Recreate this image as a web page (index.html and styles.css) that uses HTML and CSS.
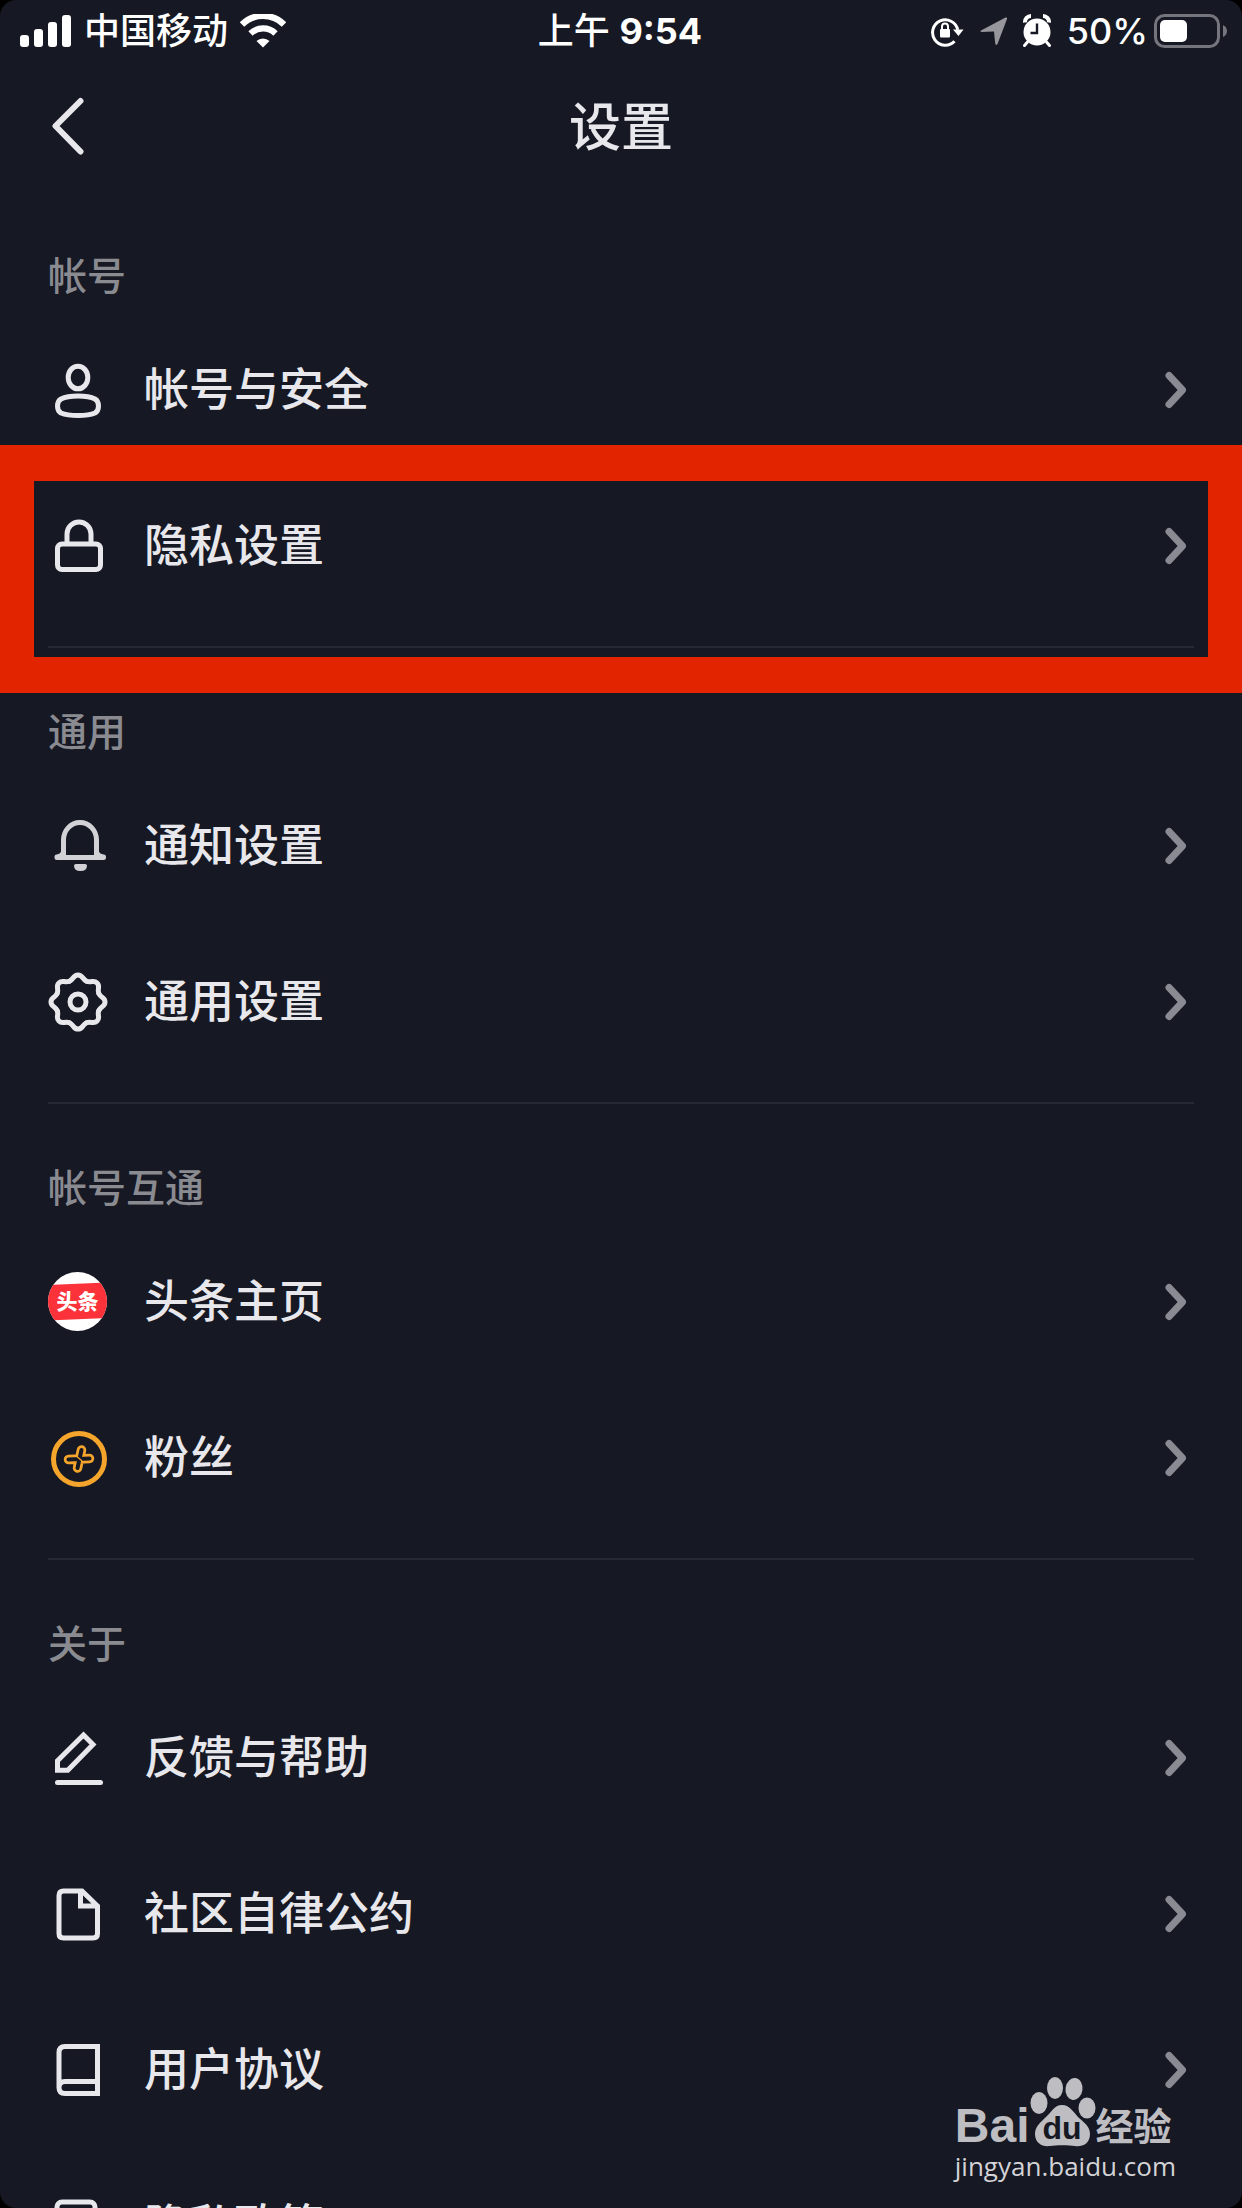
FILE: index.html
```html
<!DOCTYPE html>
<html lang="zh-CN">
<head>
<meta charset="utf-8">
<meta name="viewport" content="width=device-width">
<title>设置</title>
<link rel="stylesheet" href="styles.css">
</head>
<body>
<div class="screen">
  <div class="status">
    <div class="status-left">
      <svg class="signal" viewBox="0 0 52 34" aria-hidden="true"><rect x="0" y="21" width="9" height="12" rx="3"/><rect x="14" y="15" width="9" height="18" rx="3"/><rect x="28" y="8" width="9" height="25" rx="3"/><rect x="42" y="1" width="9" height="32" rx="3"/></svg>
      <span>中国移动</span>
      <svg class="wifi" viewBox="0 0 46 34" aria-hidden="true"><path d="M2 11.5a30 30 0 0 1 42 0" fill="none" stroke="#fff" stroke-width="6.4" transform="translate(0 -1)"/><path d="M10.500 20.500a18 18 0 0 1 25 0" fill="none" stroke="#fff" stroke-width="6.200" transform="translate(0 -1)"/><path d="M23 33.500l-6.500-6.500a9.500 9.500 0 0 1 13 0z"/></svg>
    </div>
    <div class="status-time">上午 <b>9:54</b></div>
    <div class="status-right">
      <svg class="rotation" viewBox="0 0 34 34" aria-hidden="true"><path d="M24.500 27.300a12.700 12.700 0 1 1 3.200-11.500" fill="none" stroke="#fff" stroke-width="3"/><path d="M23 15.500h10.500l-5 6.500z"/><rect x="10" y="15" width="10" height="8.500" rx="1"/><path d="M12 15v-2.500a3 3 0 0 1 6 0V15" fill="none" stroke="#fff" stroke-width="2"/></svg>
      <svg class="location" viewBox="0 0 28 30" aria-hidden="true"><path d="M1 14.500L25.500 1.500q2-.5 1.500 1.500L17.500 28q-1.500 2-2.300-.5L14 15.500 1.500 16q-2-.8-.5-1.500z" fill="#96969c"/></svg>
      <svg class="alarm" viewBox="0 0 30 34" aria-hidden="true"><circle cx="15" cy="18" r="13.500"/><path d="M3 8.500A6 6 0 0 1 9 2M21 2a6 6 0 0 1 6 6.500" fill="none" stroke="#fff" stroke-width="4"/><path d="M5.500 28L2.500 31.500M24.500 28l3 3.500" stroke="#fff" stroke-width="3" stroke-linecap="round"/><path d="M15 9.500V19H8.500" fill="none" stroke="#161823" stroke-width="2.400"/></svg>
      <span class="percent">50%</span>
      <svg class="battery" viewBox="0 0 74 34" aria-hidden="true"><rect x="1.500" y="1.500" width="63" height="31" rx="9" fill="none" stroke="#75757d" stroke-width="3"/><rect x="6" y="6" width="27" height="22" rx="5"/><path d="M69 11q4 2 4 6t-4 6z" fill="#75757d"/></svg>
    </div>
  </div>

  <header class="nav">
    <button class="back" type="button" aria-label="返回"><svg viewBox="0 0 36 60"><path d="M32.500 5L7.500 30l25 25.500"/></svg></button>
    <h1>设置</h1>
  </header>

  <main>
    <section class="group">
      <h2>帐号</h2>
      <ul>
        <li><a class="row" href="#security"><svg class="icon" viewBox="0 0 60 60"><ellipse cx="30" cy="17.500" rx="9.800" ry="11.300"/><path d="M30 36q11 0 17 3 3.500 2 3.500 7t-3.500 7q-6 2.500-17 2.500T13 53q-3.500-2-3.500-7t3.500-7q6-3 17-3z"/></svg><span>帐号与安全</span><svg class="chevron" viewBox="0 0 32 40"><path d="M7 5.500L20.500 20 7 34.500"/></svg></a></li>
        <li class="marked"><a class="row" href="#privacy"><svg class="icon" viewBox="0 0 60 60"><rect x="9.500" y="28" width="43" height="25.500" rx="4.500"/><path d="M19 27v-9a12 12 0 0 1 24 0v9"/></svg><span>隐私设置</span><svg class="chevron" viewBox="0 0 32 40"><path d="M7 5.500L20.500 20 7 34.500"/></svg></a></li>
      </ul>
    </section>

    <section class="group">
      <h2>通用</h2>
      <ul>
        <li><a class="row" href="#notice"><svg class="icon soft" viewBox="0 0 60 60"><path d="M9 41.500h46.500M15.500 41v-17a16.500 17.500 0 0 1 33 0v17M9 41q6.500-1 6.500-6M55.500 41q-7-1-7-6"/><path class="solid" d="M26 49.500q0-1.500 2-1.500h9q2 0 2 1.500 0 5.500-6.500 5.500T26 49.500z"/></svg><span>通知设置</span><svg class="chevron" viewBox="0 0 32 40"><path d="M7 5.500L20.500 20 7 34.500"/></svg></a></li>
        <li><a class="row" href="#general"><svg class="icon" viewBox="-30 -30 60 60"><path id="lobe" d="M20.800-8.600C22.700-4 27-5 27 0S22.700 4 20.800 8.600"/><use href="#lobe" transform="rotate(45)"/><use href="#lobe" transform="rotate(90)"/><use href="#lobe" transform="rotate(135)"/><use href="#lobe" transform="rotate(180)"/><use href="#lobe" transform="rotate(225)"/><use href="#lobe" transform="rotate(270)"/><use href="#lobe" transform="rotate(315)"/><circle r="8"/></svg><span>通用设置</span><svg class="chevron" viewBox="0 0 32 40"><path d="M7 5.500L20.500 20 7 34.500"/></svg></a></li>
      </ul>
    </section>

    <section class="group">
      <h2>帐号互通</h2>
      <ul>
        <li><a class="row" href="#toutiao"><svg class="icon logo" viewBox="0 0 60 60"><defs><clipPath id="disc"><circle cx="29.500" cy="29.500" r="29.500"/></clipPath></defs><g clip-path="url(#disc)"><path fill="#fff" d="M0 0h60v60H0z"/><path fill="#fb3239" d="M0 13l60-2.500V46L0 48.500z"/></g><text x="29.500" y="37" text-anchor="middle">头条</text></svg><span>头条主页</span><svg class="chevron" viewBox="0 0 32 40"><path d="M7 5.500L20.500 20 7 34.500"/></svg></a></li>
        <li><a class="row" href="#fans"><svg class="icon" viewBox="0 0 60 60"><g stroke="#f5a52c"><circle cx="31" cy="31" r="25.500" stroke-width="5"/><path d="M20.500 31.500l21-1M33.500 22l-4 18" stroke-width="9.500"/></g><path d="M20.500 31.500l21-1M33.500 22l-4 18" stroke="#161823" stroke-width="4"/><path d="M29.500 29l4.500 4" stroke="#f5a52c" stroke-width="1.200"/></svg><span>粉丝</span><svg class="chevron" viewBox="0 0 32 40"><path d="M7 5.500L20.500 20 7 34.500"/></svg></a></li>
      </ul>
    </section>

    <section class="group">
      <h2>关于</h2>
      <ul>
        <li><a class="row" href="#help"><svg class="icon" viewBox="0 0 60 60"><path class="miter" d="M35.500 7L45 16.500 19.800 42.300H9.500v-9.500z"/><path d="M9.500 54.500h43"/></svg><span>反馈与帮助</span><svg class="chevron" viewBox="0 0 32 40"><path d="M7 5.500L20.500 20 7 34.500"/></svg></a></li>
        <li><a class="row" href="#rules"><svg class="icon" viewBox="0 0 60 60"><path class="miter" d="M34 7H15.500q-4.500 0-4.500 4.500v38q0 4.500 4.500 4.500H45q4.500 0 4.500-4.500V22zM32.500 7v15h17"/></svg><span>社区自律公约</span><svg class="chevron" viewBox="0 0 32 40"><path d="M7 5.500L20.500 20 7 34.500"/></svg></a></li>
        <li><a class="row" href="#terms"><svg class="icon" viewBox="0 0 60 60"><path class="miter" d="M49.500 6.500H17q-6 0-6 6v35q0 6 6 6h32.500zM49.500 41.500H17q-6 0-6 6"/></svg><span>用户协议</span><svg class="chevron" viewBox="0 0 32 40"><path d="M7 5.500L20.500 20 7 34.500"/></svg></a></li>
        <li><a class="row" href="#policy"><svg class="icon" viewBox="0 0 60 60"><rect x="9" y="6" width="38" height="47" rx="5"/></svg><span>隐私政策</span><svg class="chevron" viewBox="0 0 32 40"><path d="M7 5.500L20.500 20 7 34.500"/></svg></a></li>
      </ul>
    </section>
  </main>

  <div class="watermark">
    <div class="brand">
      <span class="brand-bai">Bai</span>
      <svg class="paw" viewBox="0 0 66 72"><ellipse cx="9" cy="27" rx="8.500" ry="11"/><ellipse cx="25" cy="12" rx="8" ry="11"/><ellipse cx="44" cy="13" rx="8.500" ry="11" transform="rotate(8 44 13)"/><ellipse cx="57" cy="32" rx="8.500" ry="10.500"/><path d="M32 29c8 0 12 8 17 13 6 5 11 9 11 16 0 10-8 13-15 12-6-1-19-1-25 0C12 71 5 67 5 58c0-8 6-12 11-17 5-4 8-12 16-12z"/><text x="32" y="63" text-anchor="middle">du</text></svg>
      <span class="brand-exp">经验</span>
    </div>
    <div class="brand-url">jingyan.baidu.com</div>
  </div>
</div>
</body>
</html>
```
FILE: styles.css
```css
* { box-sizing: border-box; }

body {
  margin: 0;
  background: #000;
  color: #e8e8ec;
  font-family: Inter, "Noto Sans CJK SC", sans-serif;
}

h1, h2, ul { margin: 0; padding: 0; }
ul { list-style: none; }
svg { display: block; flex: none; }

.screen {
  position: relative;
  height: 100vh;
  overflow: hidden;
  border-radius: 16px;
  background: #161823;
}

/* status bar */
.status {
  display: grid;
  grid-template-columns: 1fr auto 1fr;
  align-items: center;
  height: 60px;
  padding: 2px 14px 0 18px;
  color: #fff;
  fill: #fff;
  font-size: 36px;
  font-weight: 500;
  line-height: 58px;
}
.status-left, .status-right { display: flex; align-items: center; }
.status-left { gap: 12px; padding-left: 2px; }
.status-right { justify-content: flex-end; }
.status-time { padding-right: 6px; }
.status-time b { font-weight: 700; }
.signal { width: 52px; height: 34px; }
.wifi { width: 46px; height: 34px; }
.rotation { width: 34px; height: 34px; margin-right: 16px; }
.location { width: 28px; height: 30px; margin-right: 14px; }
.alarm { width: 30px; height: 34px; margin-right: 15px; }
.percent { margin-right: 6px; }
.battery { width: 74px; height: 34px; }

/* title bar */
.nav {
  display: grid;
  grid-template-columns: 1fr auto 1fr;
  align-items: center;
  height: 132px;
  padding: 0 48px;
}
.nav h1 { padding-top: 4px; font-size: 52px; font-weight: 500; line-height: 64px; }
.back {
  width: 36px;
  padding: 0;
  border: 0;
  background: none;
}
.back svg { width: 36px; height: 60px; }
.back path {
  fill: none;
  stroke: #e8e8ec;
  stroke-width: 6;
  stroke-linecap: round;
  stroke-linejoin: round;
}

/* setting groups */
.group { position: relative; padding-bottom: 24px; }
.group:not(:last-child)::after {
  content: "";
  position: absolute;
  right: 48px;
  bottom: 0;
  left: 48px;
  height: 2px;
  background: #262832;
}
.group h2 {
  height: 120px;
  padding: 54px 48px 0;
  color: #8a8b91;
  font-size: 39px;
  font-weight: 500;
  line-height: 60px;
}
.row {
  display: flex;
  align-items: center;
  gap: 36px;
  height: 156px;
  padding: 0 48px;
  color: inherit;
  font-size: 45px;
  font-weight: 500;
  line-height: 60px;
  text-decoration: none;
}
.row span { flex: 1; }

.icon {
  width: 60px;
  height: 60px;
  overflow: visible;
  fill: none;
  stroke: #e8e8ec;
  stroke-width: 5;
  stroke-linecap: round;
  stroke-linejoin: round;
}
.icon.soft { stroke: #d2d2d6; }
.icon .solid { fill: #d2d2d6; stroke: none; }
.icon .miter { stroke-linejoin: miter; }
.icon.logo { stroke: none; }
.logo text {
  fill: #fff;
  font-family: "Noto Sans CJK SC", sans-serif;
  font-size: 21px;
  font-weight: 900;
}
.chevron {
  width: 32px;
  height: 40px;
  fill: none;
  stroke: #8a8b92;
  stroke-width: 7;
  stroke-linecap: round;
  stroke-linejoin: round;
}

/* red frame round the highlighted row */
.marked { position: relative; }
.marked::after {
  content: "";
  position: absolute;
  z-index: 1;
  top: -23px;
  right: 0;
  bottom: -69px;
  left: 0;
  border: solid #e22500;
  border-width: 36px 34px;
  pointer-events: none;
}

/* corner watermark */
.watermark {
  position: absolute;
  right: 66px;
  bottom: 24px;
  color: #bdbdc2;
  fill: #bdbdc2;
}
.brand { display: flex; align-items: flex-end; }
.brand-bai {
  font-family: "Liberation Sans", sans-serif;
  font-size: 48px;
  font-weight: 700;
  line-height: 44px;
}
.paw { width: 66px; height: 72px; }
.paw text {
  fill: #161823;
  font-family: "Liberation Sans", sans-serif;
  font-size: 32px;
  font-weight: 700;
}
.brand-exp {
  font-size: 38px;
  font-weight: 700;
  line-height: 44px;
}
.brand-url {
  color: #d3d3d7;
  font-family: "Open Sans", sans-serif;
  font-size: 26px;
  font-weight: 500;
  line-height: 36px;
}
```
